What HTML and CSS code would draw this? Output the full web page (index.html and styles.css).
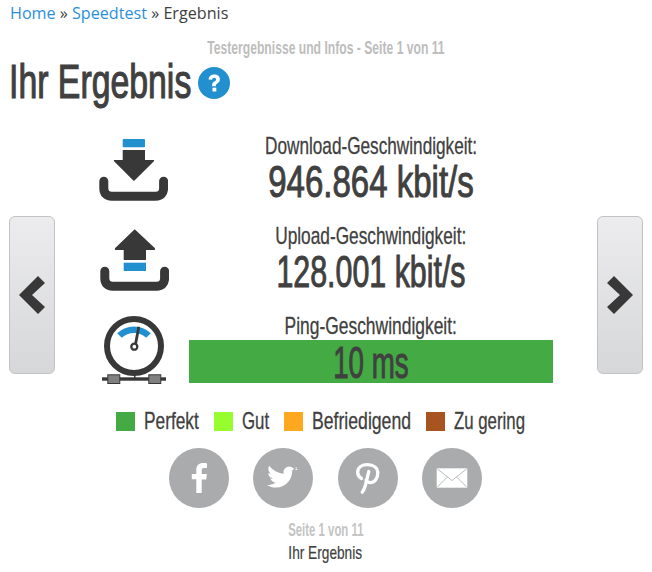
FILE: index.html
```html
<!DOCTYPE html>
<html lang="de">
<head>
<meta charset="utf-8">
<title>Ihr Ergebnis</title>
<link rel="stylesheet" href="styles.css">
</head>
<body>
<nav class="crumbs"><a href="#">Home</a> » <a href="#">Speedtest</a> » Ergebnis</nav>
<p class="kicker"><span class="sq">Testergebnisse und Infos - Seite 1 von 11</span></p>
<div class="title-row">
  <h1><span class="sq">Ihr Ergebnis</span></h1>
  <svg class="help" viewBox="0 0 32 32"><circle cx="16" cy="16" r="16" fill="#2290cf"/><path d="M10.500 12.600c.3-3.200 2.600-5 5.800-5 3.300 0 5.600 1.900 5.600 4.700 0 2-1 3.100-2.500 4.100-1.300.9-1.700 1.400-1.700 2.800h-3.600c-.1-2.300.6-3.500 2.200-4.600 1.200-.8 1.800-1.400 1.800-2.200 0-1-.8-1.600-1.900-1.600-1.200 0-2 .7-2.100 2z" fill="#fff"/><rect x="14.500" y="20.700" width="3.800" height="3.800" fill="#fff"/></svg>
</div>
<main class="stage">
  <button class="nav-btn" aria-label="Zurück"><svg viewBox="0 0 26 38" class="chev"><path d="M19 0l7 7L13 19l13 12-7 7L0 19z" fill="#383838"/></svg></button>
  <div class="results">
    <div class="row">
      <svg class="ico" viewBox="0 0 69 62"><rect x="23.700" y="0" width="22.300" height="8.300" rx="1" fill="#2290cf"/><path d="M23.700 11H46v10h8.500c.6 0 .9.700.4 1.200L35.500 41.500c-.4.300-.8.300-1.200 0L15.100 22.200c-.5-.5-.2-1.200.4-1.200h8.200z" fill="#383838"/><path d="M4.800 42.200v7c0 5.200 2.800 8 8 8h43.800c5.200 0 8-2.800 8-8v-7" fill="none" stroke="#383838" stroke-width="9" stroke-linecap="round"/></svg>
      <div class="data">
        <div class="label"><span class="sq s-dl">Download-Geschwindigkeit:</span></div>
        <div class="value"><span class="sq s-v1">946.864 kbit/s</span></div>
      </div>
    </div>
    <div class="row">
      <svg class="ico ico-up" viewBox="0 0 69 62"><path d="M34.700.3l20 18.800c.6.6.3 1.900-.6 1.900H46v10H23.700V21h-7.900c-.9 0-1.200-1.300-.6-1.900z" fill="#383838"/><rect x="23.700" y="33.700" width="22.300" height="8.300" fill="#2290cf"/><path d="M4.800 42.200v7c0 5.200 2.800 8 8 8h43.800c5.200 0 8-2.800 8-8v-7" fill="none" stroke="#383838" stroke-width="9" stroke-linecap="round"/></svg>
      <div class="data">
        <div class="label"><span class="sq s-ul">Upload-Geschwindigkeit:</span></div>
        <div class="value"><span class="sq s-v2">128.001 kbit/s</span></div>
      </div>
    </div>
    <div class="row">
      <svg class="ico gauge" viewBox="0 0 64 68"><circle cx="32" cy="30" r="27" fill="none" stroke="#383838" stroke-width="6"/><path d="M17.500 19.500a21 21 0 0 1 29 0" fill="none" stroke="#2290cf" stroke-width="6.500"/><path d="M35.500 10.500l2.600.5-3.600 20h-3z" fill="#383838"/><circle cx="32.300" cy="30.700" r="3" fill="#fff" stroke="#383838" stroke-width="2.300"/><rect x="32" y="58" width="1.500" height="5" fill="#383838"/><rect x="0" y="61.300" width="64" height="3.400" fill="#383838"/><rect x="5.800" y="58.800" width="12" height="8.700" fill="#808080" stroke="#383838"/><rect x="46.800" y="58.800" width="12" height="8.700" fill="#808080" stroke="#383838"/></svg>
      <div class="data">
        <div class="label"><span class="sq s-ping">Ping-Geschwindigkeit:</span></div>
        <div class="value bar"><span class="sq s-v3">10 ms</span></div>
      </div>
    </div>
  </div>
  <button class="nav-btn" aria-label="Weiter"><svg viewBox="0 0 26 38" class="chev"><path d="M7 0L0 7l13 12L0 31l7 7 19-19z" fill="#383838"/></svg></button>
</main>
<ul class="legend">
  <li><span class="sw sw-perfect"></span><span class="lt lt-1"><span class="sq">Perfekt</span></span></li>
  <li><span class="sw sw-good"></span><span class="lt lt-2"><span class="sq">Gut</span></span></li>
  <li><span class="sw sw-ok"></span><span class="lt lt-3"><span class="sq">Befriedigend</span></span></li>
  <li><span class="sw sw-low"></span><span class="lt lt-4"><span class="sq">Zu gering</span></span></li>
</ul>
<div class="share">
  <a href="#" class="circle" aria-label="Facebook"><svg viewBox="0 0 60 60"><path d="M32.700 45V31.400h4.500l.7-5.300h-5.200v-3.400c0-1.500.4-2.600 2.600-2.600h2.700v-4.700c-.5-.1-2.100-.3-4-.3-4 0-6.700 2.400-6.700 6.900v4h-4.500v5.300h4.500V45z" fill="#fff"/></svg></a>
  <a href="#" class="circle" aria-label="Twitter"><svg viewBox="0 0 60 60"><path d="M44.700 21.500c-1.100.5-2.100.7-3.200.8 1.200-.7 2.100-1.800 2.500-3.100-1.100.6-2.300 1.100-3.500 1.300a5.700 5.700 0 0 0-9.800 5.200C25.700 25.500 20 22.500 16.200 17.800c-1.600 2.900-.7 6.200 1.700 7.800-.9 0-1.800-.3-2.600-.7 0 2.800 1.900 5 4.600 5.600-.9.200-1.700.3-2.600.1.800 2.300 2.900 3.900 5.400 4-2.400 1.900-5.400 2.800-8.700 2.400 2.600 1.600 5.600 2.600 8.800 2.600 10.700 0 16.700-9 16.400-17.100 1.100-.8 2.100-1.800 2.900-2.900z" fill="#fff"/></svg></a>
  <a href="#" class="circle" aria-label="Pinterest"><svg viewBox="0 0 60 60"><path d="M23.500 30.500c-2.700-1.500-3.800-3.800-3.800-6.300 0-4.900 4.300-7.500 9.800-7.500 6.200 0 10.300 3.300 10.300 8.300 0 5.800-3.400 9.700-7.500 9.700-2.200 0-3.700-1-4.200-2.600" fill="none" stroke="#fff" stroke-width="3.300" stroke-linecap="round"/><path d="M30.800 23.500L27.500 37c-.8 3.200-1.800 5.400-3.300 7.300" fill="none" stroke="#fff" stroke-width="3.300" stroke-linecap="round"/></svg></a>
  <a href="#" class="circle" aria-label="E-Mail"><svg viewBox="0 0 60 60"><path d="M14.700 20.300h30.600v19.400H14.700z" fill="#fff"/><path d="M15.200 20.800L30 32.500l14.800-11.700M15.200 39.200L25.500 28.800M44.800 39.200L34.500 28.800" fill="none" stroke="#aaabad" stroke-width=".8"/></svg></a>
</div>
<p class="page"><span class="sq">Seite 1 von 11</span></p>
<p class="page-name"><span class="sq">Ihr Ergebnis</span></p>
</body>
</html>
```
FILE: styles.css
```css
* { box-sizing: border-box; }
html, body { margin: 0; padding: 0; background: #fff; }
body {
  width: 652px;
  height: 572px;
  overflow: hidden;
  padding: 0 9px;
  color: #404040;
  font-family: "Liberation Sans", sans-serif;
}
.sq { display: inline-block; white-space: nowrap; }
.crumbs {
  font-family: "Open Sans", sans-serif;
  font-size: 16.15px;
  line-height: 26px;
  margin-left: 1px;
  color: #404040;
}
.crumbs a { color: #2b8fdc; text-decoration: none; }
.kicker {
  margin: 12px 0 0;
  padding-right: 1px;
  text-align: center;
  font-size: 18px;
  line-height: 20px;
  font-weight: 700;
  color: #bdbdbd;
  white-space: nowrap;
}
.kicker .sq { transform: scaleX(.675); }
.title-row {
  display: flex;
  align-items: center;
  gap: 7px;
  height: 50px;
  margin-top: -2px;
}
h1 {
  margin: 0;
  width: 182px;
  font-size: 49px;
  font-weight: 400;
  line-height: 50px;
  color: #404040;
  white-space: nowrap;
  -webkit-text-stroke: 1.2px #404040;
}
h1 .sq { transform-origin: left center; transform: scaleX(.69); }
.help { width: 32px; height: 32px; margin-top: 4px; }
.stage {
  display: flex;
  justify-content: space-between;
  align-items: flex-start;
  margin-top: 28px;
}
.nav-btn {
  width: 46px;
  height: 158px;
  padding: 0;
  margin-top: 82px;
  display: flex;
  align-items: center;
  justify-content: center;
  border: 1px solid #c2c2c2;
  border-radius: 6px;
  background: linear-gradient(#ececee, #d6d7d9);
}
.chev { width: 26px; height: 38px; }
.results {
  width: 454px;
  display: flex;
  flex-direction: column;
  gap: 18px;
}
.row {
  display: grid;
  grid-template-columns: 90px 364px;
  align-items: center;
}
.ico { width: 69px; height: 62px; }
.ico-up { margin-left: 1px; }
.gauge { width: 64px; height: 68px; margin: 2px 0 -1px 3px; }
.data { text-align: center; white-space: nowrap; }
.label { font-size: 24px; line-height: 24px; -webkit-text-stroke: .3px #404040; }
.value { font-size: 44px; line-height: 48px; -webkit-text-stroke: 1px #404040; }
.s-dl { transform: scaleX(.716); }
.s-ul { transform: scaleX(.72); }
.s-ping { transform: scaleX(.726); }
.s-v1 { transform: scaleX(.75); }
.s-v2 { transform: scaleX(.69); }
.s-v3 { transform: scaleX(.63); }
.bar {
  background: #43aa44;
  height: 43px;
  margin-top: 2px;
  line-height: 45px;
}
.legend {
  list-style: none;
  display: flex;
  justify-content: center;
  gap: 15px;
  margin: 23px 0 0;
  padding: 0 11px 0 0;
  font-size: 24px;
  line-height: 30px;
  white-space: nowrap;
  -webkit-text-stroke: .3px #404040;
}
.legend li { display: flex; align-items: center; gap: 9px; }
.sw { width: 19px; height: 19px; }
.sw-perfect { background: #43aa44; }
.sw-good { background: #96fe2e; }
.sw-ok { background: #fea820; }
.sw-low { background: #a85420; }
.lt .sq { transform-origin: left center; }
.lt { display: block; }
.lt-1 { width: 55px; }
.lt-2 { width: 27px; }
.lt-3 { width: 99px; }
.lt-4 { width: 71px; }
.lt-1 .sq { transform: scaleX(.72); }
.lt-2 .sq { transform: scaleX(.70); }
.lt-3 .sq { transform: scaleX(.735); }
.lt-4 .sq { transform: scaleX(.70); }
.share {
  display: flex;
  justify-content: center;
  gap: 24.300px;
  margin-top: 12px;
  padding-right: 1px;
}
.circle {
  width: 60px;
  height: 60px;
  border-radius: 50%;
  background: #aaabad;
  display: block;
}
.circle svg { display: block; width: 60px; height: 60px; }
.page, .page-name { margin: 0; text-align: center; font-size: 19px; white-space: nowrap; padding-right: 1px; }
.page { margin-top: 10px; line-height: 23px; color: #c4c4c4; font-weight: 700; }
.page .sq { transform: scaleX(.60); }
.page-name { line-height: 24px; color: #404040; -webkit-text-stroke: .2px #404040; }
.page-name .sq { transform: scaleX(.72); }
```
